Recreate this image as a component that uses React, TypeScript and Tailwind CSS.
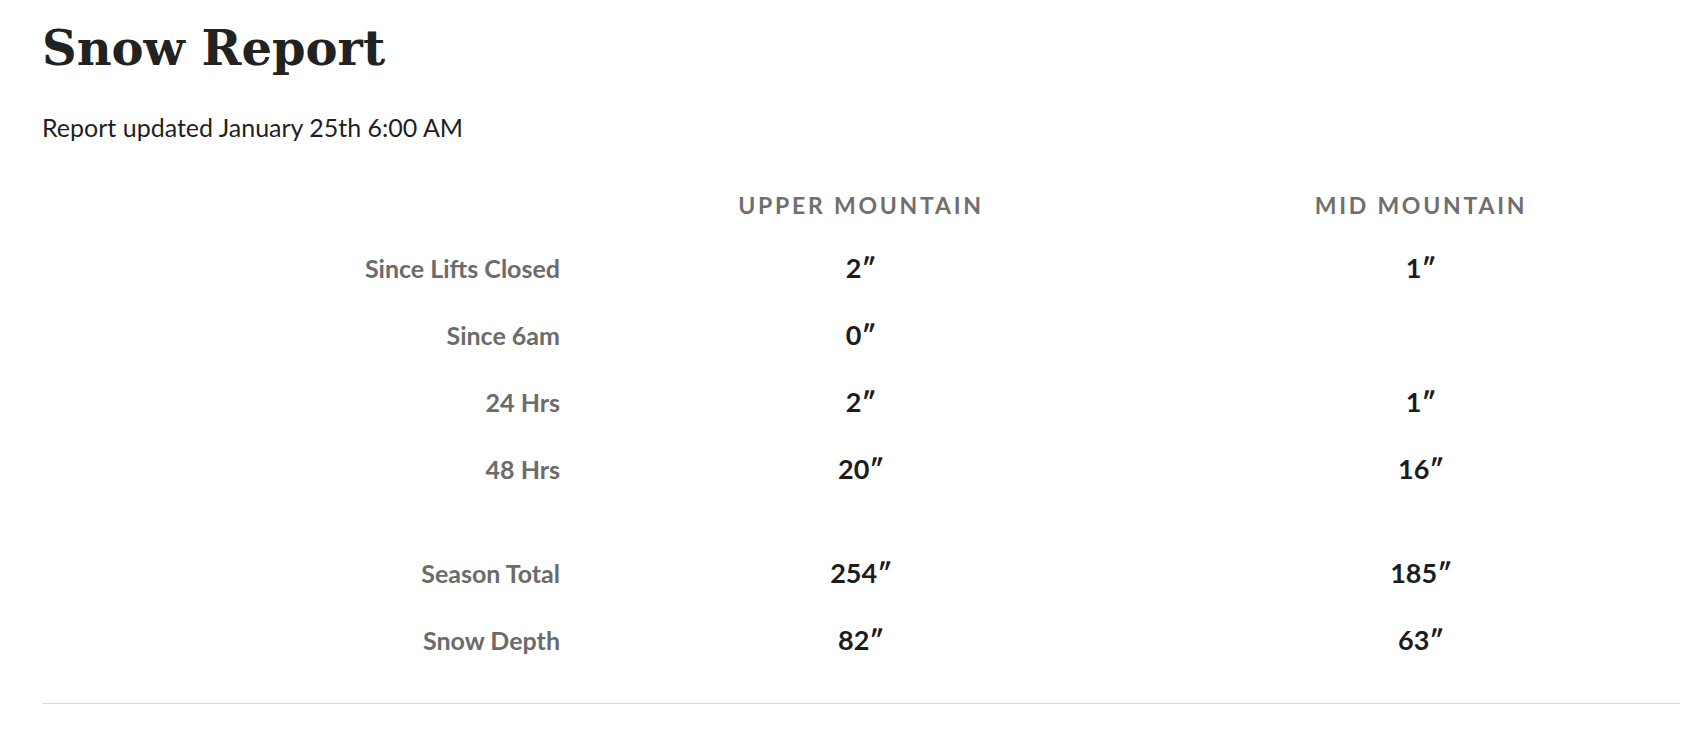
const rows = [
  { label: "Since Lifts Closed", upper: "2″", mid: "1″" },
  { label: "Since 6am", upper: "0″", mid: "" },
  { label: "24 Hrs", upper: "2″", mid: "1″" },
  { label: "48 Hrs", upper: "20″", mid: "16″" },
];

const totals = [
  { label: "Season Total", upper: "254″", mid: "185″" },
  { label: "Snow Depth", upper: "82″", mid: "63″" },
];

function Row({ label, upper, mid }: { label: string; upper: string; mid: string }) {
  return (
    <div className="grid h-[67px] grid-cols-[518px_602px_518px] items-center">
      <div className="text-right text-[25px] font-bold text-[#6b6b6b]">{label}</div>
      <div className="text-center text-[27px] font-bold text-[#1c1c1c]">{upper}</div>
      <div className="text-center text-[27px] font-bold text-[#1c1c1c]">{mid}</div>
    </div>
  );
}

export default function App() {
  return (
    <div className="min-h-[734px] bg-white px-[42px] pt-[20px] font-['Lato',sans-serif]">
      <h1 className="font-['DejaVu_Serif',serif] text-[48px] font-bold leading-[56px] text-[#222]">Snow Report</h1>
      <p className="mt-[36px] text-[25px] leading-[30px] text-[#1f1f1f]">Report updated January 25th 6:00 AM</p>

      <div className="mt-[33px] w-[1638px]">
        <div className="grid h-[60px] grid-cols-[518px_602px_518px] items-center">
          <div />
          <div className="text-center text-[23px] font-bold uppercase tracking-[0.12em] text-[#6f6f6f]">Upper Mountain</div>
          <div className="text-center text-[23px] font-bold uppercase tracking-[0.12em] text-[#6f6f6f]">Mid Mountain</div>
        </div>
        {rows.map((r) => (
          <Row key={r.label} {...r} />
        ))}
        <div className="h-[37px]" />
        {totals.map((r) => (
          <Row key={r.label} {...r} />
        ))}
      </div>

      <hr className="mt-[29px] w-[1638px] border-t border-[#d9d9d9]" />
    </div>
  );
}
